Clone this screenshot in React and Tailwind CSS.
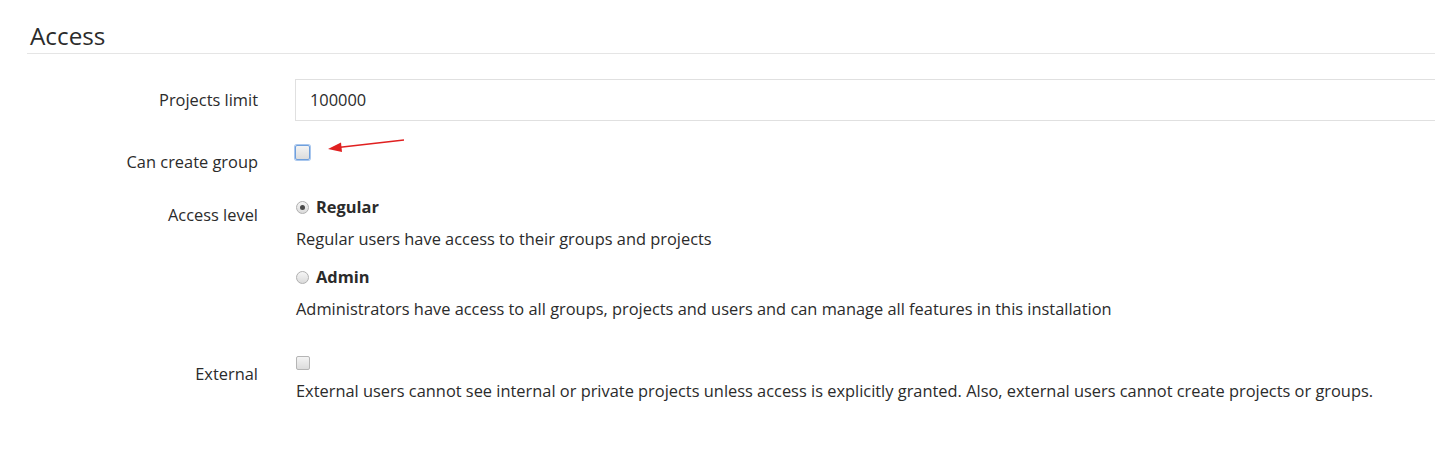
import React from "react";

function Checkbox({ focused }) {
  return (
    <span
      className={
        "inline-block rounded-[2px] border bg-gradient-to-b from-[#f4f4f4] to-[#dcdcdc] " +
        (focused ? "w-[15px] h-[15px] border-[#6f9fdc] ring-1 ring-[#a9c7ee]" : "w-[14px] h-[14px] border-[#b5b5b5]")
      }
    />
  );
}

function Radio({ checked }) {
  return (
    <span className="inline-flex items-center justify-center w-[13px] h-[13px] rounded-full border border-[#b0b0b0] bg-gradient-to-b from-[#f6f6f6] to-[#dadada]">
      {checked && <span className="w-[5px] h-[5px] rounded-full bg-[#4a4a4a]" />}
    </span>
  );
}

export default function App() {
  return (
    <div
      className="relative w-[1435px] h-[466px] bg-white overflow-hidden text-[#2b2b2b]"
      style={{ fontFamily: '"Open Sans", "Noto Sans", Arial, sans-serif' }}
    >
      <div className="pl-[27px] pt-[19px]">
        <h4 className="text-[24.3px] leading-[33px] pl-[3px] pb-[1px] border-b border-[#e5e5e5]">
          Access
        </h4>

        <div className="mt-[25px] flex items-center h-[42px]">
          <label className="w-[231px] text-right text-[16.4px] pt-[1px]">Projects limit</label>
          <div className="ml-[37px] flex-1 h-[42px] border border-r-0 border-[#e0e0e0] flex items-center pl-[14px] pt-[1px] text-[16.4px]">
            100000
          </div>
        </div>

        <div className="mt-[24px] flex items-start">
          <label className="w-[231px] text-right text-[16.4px] leading-[20px] pt-[7px]">Can create group</label>
          <div className="ml-[37px] flex">
            <Checkbox focused />
          </div>
        </div>

        <div className="mt-[25px] flex items-start">
          <label className="w-[231px] text-right text-[16.4px] leading-[20px] pt-[8px]">Access level</label>
          <div className="ml-[38px] text-[16.4px]">
            <div className="flex items-center gap-[7px] h-[20px]">
              <Radio checked />
              <span className="font-bold">Regular</span>
            </div>
            <div className="mt-[12px] leading-[20px]">Regular users have access to their groups and projects</div>
            <div className="mt-[18px] flex items-center gap-[7px] h-[20px]">
              <Radio />
              <span className="font-bold">Admin</span>
            </div>
            <div className="mt-[12px] leading-[20px]">
              Administrators have access to all groups, projects and users and can manage all features in this installation
            </div>
          </div>
        </div>

        <div className="mt-[37px] flex items-start">
          <label className="w-[231px] text-right text-[16.4px] leading-[20px] pt-[8px]">External</label>
          <div className="ml-[38px] text-[16.4px]">
            <div className="flex h-[16px]">
              <Checkbox />
            </div>
            <div className="mt-[9px] leading-[20px]">
              External users cannot see internal or private projects unless access is explicitly granted. Also, external users cannot create projects or groups.
            </div>
          </div>
        </div>
      </div>

      <svg className="absolute left-[320px] top-[132px]" width="90" height="24" viewBox="0 0 90 24">
        <line x1="84" y1="8" x2="18" y2="15.5" stroke="#e02020" strokeWidth="1.6" />
        <polygon points="8,17 21,10.5 22,20" fill="#e02020" />
      </svg>
    </div>
  );
}
